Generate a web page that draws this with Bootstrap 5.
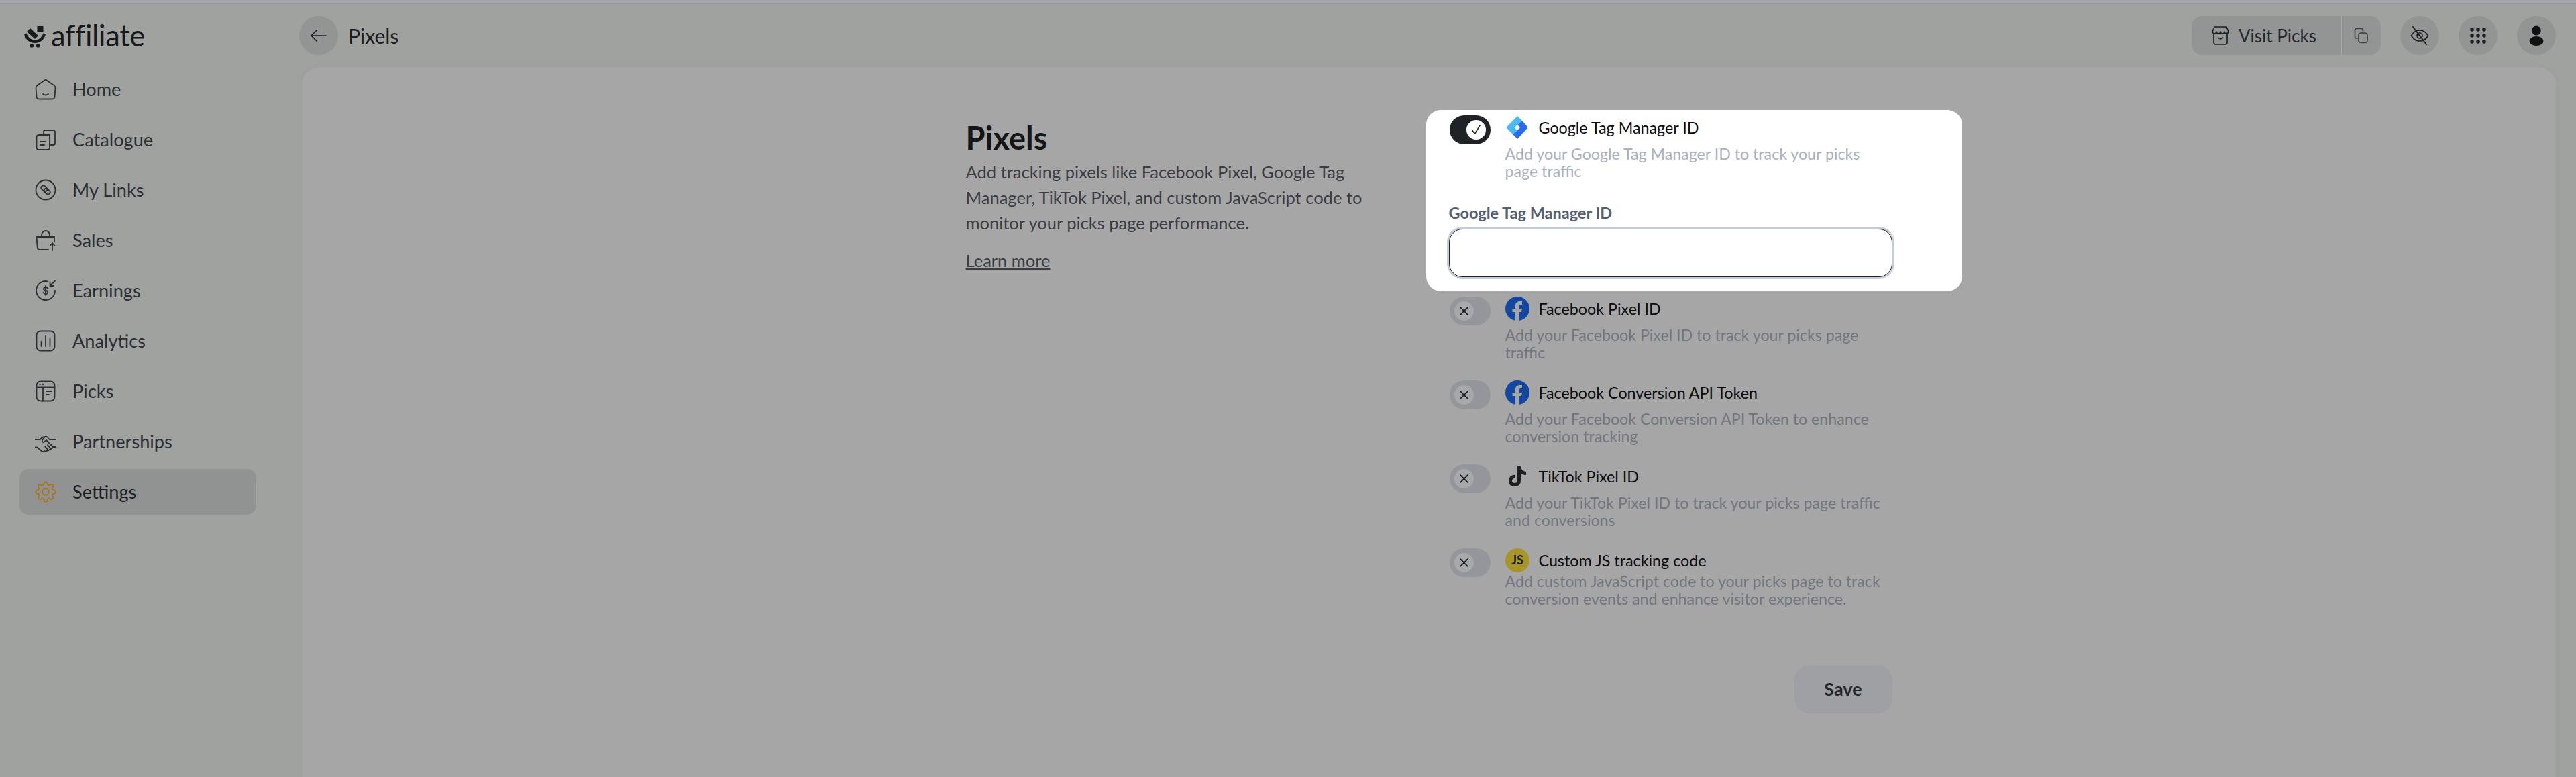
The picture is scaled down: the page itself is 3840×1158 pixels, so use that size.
<!DOCTYPE html>
<html lang="en">
<head>
<meta charset="utf-8">
<title>Pixels</title>
<link href="https://cdn.jsdelivr.net/npm/bootstrap@5.3.0/dist/css/bootstrap.min.css" rel="stylesheet">
<style>
html,body{height:100%;overflow:hidden}
body{font-family:"Lato","Liberation Sans",sans-serif;background:#a0a2a0;color:#1b1d1f}
.top-strip{height:6px;background:#a5a4aa;border-bottom:2px solid #96959e}
.shell{height:calc(100vh - 6px)}
.side{width:450px;flex:none;padding:0 68px 0 29px}
.brand{height:93px;padding:33px 0 0 6px;gap:7px;font-size:43.5px;line-height:44px;color:#17191b;letter-spacing:-.3px}
.brand span{margin-top:-9px}
.side .nav{gap:7px}
.side .nav-link{height:68px;padding:0 0 0 23px;gap:24px;font-size:27.2px;color:#2c2f33;border-radius:14px}
.side .nav-link.active-item{background:#919392;color:#1b1d1f}
.side svg{width:32px;height:32px;flex:none;fill:none;stroke:#2c2f33;stroke-width:1.8;stroke-linecap:round;stroke-linejoin:round}
.side .brand svg{width:34px;height:32px;fill:#17191b;stroke:none}
.head-bar{height:94px;padding:18px 30px 18px 0}
.main-col{min-width:0}
.round-btn{width:58px;height:58px;border-radius:50%;background:#939594;border:0;padding:0;flex:none}
.head-bar svg{fill:none;stroke:#1e2124;stroke-width:1.7;stroke-linecap:round;stroke-linejoin:round}
.head-bar svg.dots{fill:#1e2124;stroke:none}
.head-bar svg.user{fill:#0f1112;stroke:none}
.back-wrap{margin-left:-4px;gap:15px;font-size:30px;color:#1b1d1f}
.visit{height:58px;width:282px;margin-right:29px;background:#939594;border-radius:16px;font-size:26px;color:#24272a}
.visit-main{width:224px;border-right:1px solid #a8aaa9;gap:14px;padding-left:30px}
.visit-copy{flex:1}
.head-bar .visit-copy svg{stroke:#3e4144}
.round-gap{gap:29px}
.panel{flex:1;margin-right:30px;background:#a6a6a6;border-radius:26px 26px 0 0;box-shadow:0 0 8px rgba(0,0,0,.05);padding-top:64px}
.wrap-inner{width:1381px;margin:0 auto}
.intro{width:720px;flex:none}
.intro h1{font-size:47px;font-weight:700;color:#141618;line-height:56px;margin:13px 0 4px}
.intro p{font-size:25.5px;line-height:38px;color:#3a3d42;margin:0 0 18px}
.intro a{font-size:25.5px;color:#3a3d42}
.spot{margin:0 -104px 8px -34px;padding:8px 104px 21px 34px;background:#fff;border-radius:22px}
.pix-row{gap:23px;margin-bottom:29px}
.spot .pix-row{margin-bottom:0}
.tog{width:61px;height:43px;margin-left:1px;border-radius:22px;flex:none;background:#94969b;padding:7px}
.tog .knob{width:29px;height:29px;border-radius:50%;background:#a7a8aa}
.tog.on{background:#1f2327;justify-content:flex-end}
.tog.on .knob{background:#fff}
.tog svg{width:17px;height:17px;fill:none;stroke:#1c1f22;stroke-width:1.8;stroke-linecap:round;stroke-linejoin:round}
.pix-body{width:560px;margin-left:-1px}
.pix-title{gap:14px;height:36px;font-size:23.3px;color:#0b0c0d;font-weight:400;white-space:nowrap}
.pix-title svg{width:36px;height:36px;flex:none}
.pix-desc{font-size:23.2px;line-height:25.5px;color:#72767f;margin-top:9px;white-space:nowrap}
.spot .pix-desc{color:#a9b1bd;margin-top:8px;line-height:26px}
.pix-desc.tight{margin-top:0;line-height:26px}
.fld-label{font-size:23.5px;font-weight:700;color:#556070;line-height:34px;margin:32px 0 7px}
.spot .form-control{height:72px;border:1px solid #1f2327;border-radius:20px;box-shadow:0 0 0 3px #c5ccd6;background:#fff}
.save-btn{width:146px;height:72px;margin-top:57px;background:#9ea0a4;border:0;border-radius:22px;font-size:27px;font-weight:700;color:#24272a}
.save-btn:hover{background:#9ea0a4;color:#24272a}
</style>
</head>
<body>
<div class="top-strip"></div>
<div class="shell d-flex">
  <aside class="side">
    <div class="brand d-flex align-items-start">
      <svg viewBox="0 0 34 32"><path d="M1 12 L4.5 10.5 C7 17 11 20.5 17 20.5 C23 20.5 27 17 29.5 10.5 L33 12 C31 20 25 25 17 25 C9 25 3 20 1 12Z"/><path d="M10 3 L22 14 L17 19 L5 8Z"/><rect x="20.5" y="0" width="9" height="8.5"/><circle cx="12.3" cy="29" r="2.8"/><circle cx="21.7" cy="29" r="2.8"/></svg>
      <span>affiliate</span>
    </div>
    <nav class="nav flex-column">
      <a class="nav-link d-flex align-items-center" href="#"><svg viewBox="0 0 32 32"><path d="M16 1.5 L28.5 10 Q30.5 11.5 30.5 14 L29.5 27 Q29.3 30.5 26 30.5 H6 Q2.7 30.5 2.5 27 L1.5 14 Q1.5 11.5 3.5 10 Z"/><path d="M12 23 q4 3 8 0"/></svg>Home</a>
      <a class="nav-link d-flex align-items-center" href="#"><svg viewBox="0 0 32 32"><path d="M13 8 V4 Q13 2 15 2 H27 Q30 2 30 5 V21 Q30 24 27 24 H23"/><path d="M6 9 H16 L22 9 V28 Q22 31 19 31 H6 Q2.5 31 2.5 28 V13 Q2.5 9 6 9Z"/><path d="M8 19 H16 M8 24 H14"/></svg>Catalogue</a>
      <a class="nav-link d-flex align-items-center" href="#"><svg viewBox="0 0 32 32"><circle cx="16" cy="16" r="14.5"/><g transform="rotate(45 16 16)"><rect x="8" y="12.8" width="10" height="6.4" rx="3.2"/><rect x="14" y="12.8" width="10" height="6.4" rx="3.2"/></g></svg>My Links</a>
      <a class="nav-link d-flex align-items-center" href="#"><svg viewBox="0 0 32 32"><path d="M20 30 H7 Q4 30 3.8 27 L2.5 11 H29 V18"/><path d="M10 11 V8 a6 6 0 0 1 12 0 V11"/><path d="M26 31 V20 M22.5 24 L26 20 L29.5 24"/></svg>Sales</a>
      <a class="nav-link d-flex align-items-center" href="#"><svg viewBox="0 0 32 32"><path d="M19.5 2.5 A14 14 0 1 0 30 16"/><path d="M30 1.5 L22.5 9 M22.5 3.5 V9 H28"/><path d="M19.5 13 q-1-2-3.5-2 q-3 0-3 2.5 t3 2.5 q3.2 0 3.2 2.5 t-3.2 2.5 q-2.5 0-3.5-2 M16 9 v14"/></svg>Earnings</a>
      <a class="nav-link d-flex align-items-center" href="#"><svg viewBox="0 0 32 32"><rect x="2.5" y="1.5" width="27" height="29" rx="6"/><path d="M9.5 24 V17 M16 24 V9 M22.5 24 V13"/></svg>Analytics</a>
      <a class="nav-link d-flex align-items-center" href="#"><svg viewBox="0 0 32 32"><rect x="2.5" y="1.5" width="27" height="29" rx="6"/><path d="M2.5 10.5 H29.5 M12 10.5 V30.5 M17 16 H24.5 M17 21 H21"/><path d="M7.5 6 h.1 M12 6 h.1" stroke-width="2.6"/></svg>Picks</a>
      <a class="nav-link d-flex align-items-center" href="#"><svg viewBox="0 0 32 32"><path d="M0.5 13 H8 Q11 9 15 9 H18 L21.5 13 H31.5"/><path d="M15 9 L11 14 Q10 17 13 17 L17 14 L27 24"/><path d="M0.5 24.5 H3 L10.5 30.5 Q12.5 32 14 30 Q16 31.5 18 29.5 Q20.5 30 22 27.5 Q25 27.5 27 24 H31.5"/><path d="M15 23 l4 5 M19 21 l4 5"/></svg>Partnerships</a>
      <a class="nav-link d-flex align-items-center active-item" href="#"><svg viewBox="0 0 24 24" style="stroke:#a8741f;stroke-width:1.4"><circle cx="12" cy="12" r="3.6"/><path d="M19.4 15a1.65 1.65 0 0 0 .33 1.82l.06.06a2 2 0 0 1 0 2.83 2 2 0 0 1-2.83 0l-.06-.06a1.65 1.65 0 0 0-1.82-.33 1.65 1.65 0 0 0-1 1.51V21a2 2 0 0 1-2 2 2 2 0 0 1-2-2v-.09A1.65 1.65 0 0 0 9 19.4a1.65 1.65 0 0 0-1.82.33l-.06.06a2 2 0 0 1-2.83 0 2 2 0 0 1 0-2.83l.06-.06a1.65 1.65 0 0 0 .33-1.82 1.65 1.65 0 0 0-1.51-1H3a2 2 0 0 1-2-2 2 2 0 0 1 2-2h.09A1.65 1.65 0 0 0 4.6 9a1.65 1.65 0 0 0-.33-1.82l-.06-.06a2 2 0 0 1 0-2.83 2 2 0 0 1 2.83 0l.06.06a1.65 1.65 0 0 0 1.82.33H9a1.65 1.65 0 0 0 1-1.51V3a2 2 0 0 1 2-2 2 2 0 0 1 2 2v.09a1.65 1.65 0 0 0 1 1.51 1.65 1.65 0 0 0 1.82-.33l.06-.06a2 2 0 0 1 2.83 0 2 2 0 0 1 0 2.83l-.06.06a1.65 1.65 0 0 0-.33 1.82V9a1.65 1.65 0 0 0 1.51 1H21a2 2 0 0 1 2 2 2 2 0 0 1-2 2h-.09a1.65 1.65 0 0 0-1.51 1z"/></svg>Settings</a>
    </nav>
  </aside>
  <div class="main-col flex-grow-1 d-flex flex-column">
    <header class="head-bar d-flex justify-content-between">
      <div class="back-wrap d-flex align-items-center">
        <button class="round-btn d-flex align-items-center justify-content-center" type="button" aria-label="Back"><svg width="26" height="20" viewBox="0 0 26 20"><path d="M24 10 H2 M10 2 L2 10 L10 18"/></svg></button>
        <span>Pixels</span>
      </div>
      <div class="d-flex align-items-center">
        <div class="visit d-flex">
          <div class="visit-main d-flex align-items-center">
            <svg width="26" height="30" viewBox="0 0 26 30"><path d="M3 11 V25 Q3 28 6 28 H20 Q23 28 23 25 V11"/><path d="M4 2 H22 L25 9 Q25 12 22 12 Q19 12 19 9 Q19 12 16 12 Q13 12 13 9 Q13 12 10 12 Q7 12 7 9 Q7 12 4 12 Q1 12 1 9 Z"/><path d="M9.5 18 q3.5 3.5 7 0"/></svg>
            <span>Visit Picks</span>
          </div>
          <div class="visit-copy d-flex align-items-center justify-content-center">
            <svg width="22" height="24" viewBox="0 0 22 24"><path d="M5 16 H4 Q1.5 16 1.5 13.5 V4 Q1.5 1.5 4 1.5 H11 Q13.5 1.5 13.5 4 V8"/><rect x="7" y="8" width="13" height="14.5" rx="3.5"/></svg>
          </div>
        </div>
        <div class="d-flex round-gap">
          <button class="round-btn d-flex align-items-center justify-content-center" type="button" aria-label="Hide"><svg width="28" height="28" viewBox="0 0 28 28"><path d="M1.5 14 Q6 6 14 6 Q22 6 26.5 14 Q22 22 14 22 Q6 22 1.5 14Z"/><circle cx="14" cy="14" r="4"/><path d="M4 1 L24 27" stroke-width="2"/></svg></button>
          <button class="round-btn d-flex align-items-center justify-content-center" type="button" aria-label="Apps"><svg class="dots" width="24" height="24" viewBox="0 0 24 24"><circle cx="3" cy="3" r="2.8"/><circle cx="12" cy="3" r="2.8"/><circle cx="21" cy="3" r="2.8"/><circle cx="3" cy="12" r="2.8"/><circle cx="12" cy="12" r="2.8"/><circle cx="21" cy="12" r="2.8"/><circle cx="3" cy="21" r="2.8"/><circle cx="12" cy="21" r="2.8"/><circle cx="21" cy="21" r="2.8"/></svg></button>
          <button class="round-btn d-flex align-items-center justify-content-center" type="button" aria-label="Account"><svg class="user" width="22" height="30" viewBox="0 0 22 30"><ellipse cx="11" cy="7.5" rx="6.8" ry="7"/><ellipse cx="11" cy="23" rx="10.5" ry="7"/></svg></button>
        </div>
      </div>
    </header>
    <main class="panel">
      <div class="wrap-inner d-flex">
        <div class="intro">
          <h1>Pixels</h1>
          <p>Add tracking pixels like Facebook Pixel, Google Tag<br>Manager, TikTok Pixel, and custom JavaScript code to<br>monitor your picks page performance.</p>
          <a href="#">Learn more</a>
        </div>
        <div class="flex-grow-1">
          <section class="spot">
            <div class="pix-row d-flex">
              <div class="tog on d-flex"><div class="knob d-flex align-items-center justify-content-center"><svg viewBox="0 0 18 18"><path d="M3 10 L7 15 L15 2"/></svg></div></div>
              <div class="pix-body">
                <div class="pix-title d-flex align-items-center"><svg viewBox="0 0 36 36"><path d="M25 8 L32 16 Q34 18 32 20 L18 35 L11 28 L21 18 L18 14Z" fill="#2a6cf0"/><path d="M18 1 L25 8 L14 18 L18 23 L11 28 L3 20 Q1 18 3 16Z" fill="#4ab9f4"/><path d="M18 14 L22 18 L18 22 L14 18Z" fill="#fff"/></svg><span>Google Tag Manager ID</span></div>
                <div class="pix-desc">Add your Google Tag Manager ID to track your picks<br>page traffic</div>
              </div>
            </div>
            <label class="form-label fld-label d-block" for="gtm">Google Tag Manager ID</label>
            <input id="gtm" class="form-control" type="text">
          </section>
          <div class="pix-row d-flex">
            <div class="tog d-flex"><div class="knob d-flex align-items-center justify-content-center"><svg viewBox="0 0 18 18"><path d="M3 3 L15 15 M15 3 L3 15"/></svg></div></div>
            <div class="pix-body">
              <div class="pix-title d-flex align-items-center"><svg viewBox="0 0 36 36"><circle cx="18" cy="18" r="18" fill="#1347a0"/><path d="M15 36 V23 H10.5 V18 H15 V13.5 Q15 7 21.5 7 H25 V12 H22.5 Q20.5 12 20.5 14 V18 H25 L24 23 H20.5 V36Z" fill="#a6a6a6"/></svg><span>Facebook Pixel ID</span></div>
              <div class="pix-desc">Add your Facebook Pixel ID to track your picks page<br>traffic</div>
            </div>
          </div>
          <div class="pix-row d-flex">
            <div class="tog d-flex"><div class="knob d-flex align-items-center justify-content-center"><svg viewBox="0 0 18 18"><path d="M3 3 L15 15 M15 3 L3 15"/></svg></div></div>
            <div class="pix-body">
              <div class="pix-title d-flex align-items-center"><svg viewBox="0 0 36 36"><circle cx="18" cy="18" r="18" fill="#1347a0"/><path d="M15 36 V23 H10.5 V18 H15 V13.5 Q15 7 21.5 7 H25 V12 H22.5 Q20.5 12 20.5 14 V18 H25 L24 23 H20.5 V36Z" fill="#a6a6a6"/></svg><span>Facebook Conversion API Token</span></div>
              <div class="pix-desc">Add your Facebook Conversion API Token to enhance<br>conversion tracking</div>
            </div>
          </div>
          <div class="pix-row d-flex">
            <div class="tog d-flex"><div class="knob d-flex align-items-center justify-content-center"><svg viewBox="0 0 18 18"><path d="M3 3 L15 15 M15 3 L3 15"/></svg></div></div>
            <div class="pix-body">
              <div class="pix-title d-flex align-items-center"><svg viewBox="0 0 36 36"><path d="M18 3 H23 Q23.5 10 31 11 V16 Q26 16 23 13.5 V24 Q23 33 14 33 Q5 33 5 24.5 Q5 16 15 15.5 V20.5 Q10 21 10 24.5 Q10 28 14 28 Q18 28 18 24Z" fill="#1d1f22"/></svg><span>TikTok Pixel ID</span></div>
              <div class="pix-desc">Add your TikTok Pixel ID to track your picks page traffic<br>and conversions</div>
            </div>
          </div>
          <div class="pix-row d-flex">
            <div class="tog d-flex"><div class="knob d-flex align-items-center justify-content-center"><svg viewBox="0 0 18 18"><path d="M3 3 L15 15 M15 3 L3 15"/></svg></div></div>
            <div class="pix-body">
              <div class="pix-title d-flex align-items-center"><svg viewBox="0 0 36 36"><circle cx="18" cy="18" r="18" fill="#a8952a"/><text x="18" y="24" text-anchor="middle" font-family="Lato, sans-serif" font-size="18" font-weight="700" fill="#17191b">JS</text></svg><span>Custom JS tracking code</span></div>
              <div class="pix-desc tight">Add custom JavaScript code to your picks page to track<br>conversion events and enhance visitor experience.</div>
            </div>
          </div>
          <div class="d-flex justify-content-end">
            <button class="btn save-btn" type="button">Save</button>
          </div>
        </div>
      </div>
    </main>
  </div>
</div>
<script src="https://cdn.jsdelivr.net/npm/bootstrap@5.3.0/dist/js/bootstrap.bundle.min.js"></script>
</body>
</html>
